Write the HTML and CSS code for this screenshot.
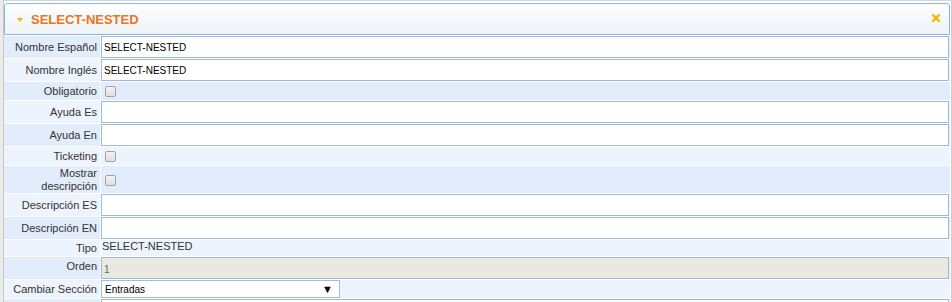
FILE: index.html
```html
<!DOCTYPE html>
<html lang="es">
<head>
    <meta charset="UTF-8" />
    <title>SELECT-NESTED</title>
    <link rel="stylesheet" href="styles.css">
</head>
<body>
    <div class="frame">
        <div class="panel-header">
            <span class="caret"></span>
            <span class="panel-title">SELECT-NESTED</span>
            <svg class="close-icon" width="8" height="8" viewBox="0 0 8 8">
                <path d="M1 1 L7 7 M7 1 L1 7" stroke="#fbb800" stroke-width="2.4" stroke-linecap="square" />
            </svg>
        </div>

        <div class="fields">
            <div class="row dark">
                <label class="field-label" for="nombreEs">Nombre Español</label>
                <div class="field-value"><input type="text" id="nombreEs" value="SELECT-NESTED"></div>
            </div>
            <div class="row light">
                <label class="field-label" for="nombreEn">Nombre Inglés</label>
                <div class="field-value"><input type="text" id="nombreEn" value="SELECT-NESTED"></div>
            </div>
            <div class="row dark check-row">
                <label class="field-label" for="obligatorio">Obligatorio</label>
                <div class="field-value"><input type="checkbox" id="obligatorio"></div>
            </div>
            <div class="row light">
                <label class="field-label" for="ayudaEs">Ayuda Es</label>
                <div class="field-value"><input type="text" id="ayudaEs"></div>
            </div>
            <div class="row dark">
                <label class="field-label" for="ayudaEn">Ayuda En</label>
                <div class="field-value"><input type="text" id="ayudaEn"></div>
            </div>
            <div class="row light check-row">
                <label class="field-label" for="ticketing">Ticketing</label>
                <div class="field-value"><input type="checkbox" id="ticketing"></div>
            </div>
            <div class="row dark tall-row">
                <label class="field-label" for="mostrarDesc">Mostrar<br>descripción</label>
                <div class="field-value"><input type="checkbox" id="mostrarDesc"></div>
            </div>
            <div class="row light">
                <label class="field-label" for="descEs">Descripción ES</label>
                <div class="field-value"><input type="text" id="descEs"></div>
            </div>
            <div class="row dark">
                <label class="field-label" for="descEn">Descripción EN</label>
                <div class="field-value"><input type="text" id="descEn"></div>
            </div>
            <div class="row light text-row">
                <span class="field-label">Tipo</span>
                <div class="field-value plain-value">SELECT-NESTED</div>
            </div>
            <div class="row dark">
                <label class="field-label label-low" for="orden">Orden</label>
                <div class="field-value"><input type="text" id="orden" value="1" disabled></div>
            </div>
            <div class="row light select-row">
                <label class="field-label" for="seccion">Cambiar Sección</label>
                <div class="field-value">
                    <div class="select-box">
                        <select id="seccion">
                            <option>Entradas</option>
                        </select>
                    </div>
                </div>
            </div>
            <!-- next row starts at the bottom edge, only its top shows -->
            <div class="row dark">
                <span class="field-label"></span>
                <div class="field-value"><input type="text" id="siguiente"></div>
            </div>
        </div>
    </div>
</body>
</html>
```

FILE: styles.css
```css
body {
    margin: 0;
    background-color: #ebebeb;
    font-family: "Liberation Sans", Arial, sans-serif;
    font-size: 11px;
    color: #333;
    height: 302px;
    overflow: hidden;
}

.frame {
    margin-left: 3px;
    padding: 2px 1px 0 0;
    background-color: #fff;
    border-left: 1px solid #c6c6c6;
    border-right: 1px solid #cfcfcf;
    border-top: 1px solid #c9d8e8;
    min-height: 320px;
}

.panel-header {
    display: flex;
    align-items: center;
    height: 30px;
    border: 1px solid #8fb6e0;
    border-radius: 3px 3px 0 0;
    background: linear-gradient(#fdfeff, #eef3f7);
    padding: 0 9px 0 12px;
}

.caret {
    width: 0;
    height: 0;
    border-left: 3px solid transparent;
    border-right: 3px solid transparent;
    border-top: 4px solid #f4b400;
    margin-right: 8px;
    margin-top: 1px;
}

.panel-title {
    flex: 1;
    color: #ee7422;
    font-weight: bold;
    font-size: 13px;
    margin-top: 1px;
}

.close-icon {
    margin-top: -2px;
}

.fields {
    padding-top: 1px;
}

.row {
    display: grid;
    grid-template-columns: 96px 1fr;
    column-gap: 1px;
    margin-bottom: 1px;
    height: 22px;
}

.row.dark > * {
    background-color: #e2ecfa;
}

.row.light > * {
    background-color: #eef4fd;
}

.check-row,
.select-row {
    height: 18px;
}

.tall-row {
    height: 27px;
}

.text-row {
    height: 16px;
}

.field-label {
    display: flex;
    align-items: center;
    justify-content: flex-end;
    text-align: right;
    padding-right: 3px;
    line-height: 13px;
}

.label-low {
    padding-bottom: 4px;
}

.field-value {
    display: flex;
    align-items: center;
    padding-right: 1px;
}

.plain-value {
    align-items: flex-start;
    padding-left: 1px;
    line-height: 13px;
}

input[type="text"] {
    box-sizing: border-box;
    width: 100%;
    height: 22px;
    margin: 0;
    padding: 0 2px;
    border: 1px solid #9dbbd9;
    background-color: #fff;
    font-family: "Liberation Sans", Arial, sans-serif;
    font-size: 10px;
    color: #000;
    outline: none;
}

input[type="text"]:disabled {
    background-color: #e9e8e1;
    color: #666;
    padding-top: 3px;
}

input[type="checkbox"] {
    appearance: none;
    box-sizing: border-box;
    width: 11px;
    height: 11px;
    margin: 0 0 0 4px;
    border: 1px solid #a3a3a3;
    border-radius: 2px;
    background: linear-gradient(#f3f3f3, #dedede);
}

.tall-row input[type="checkbox"] {
    margin-top: 1px;
}

.select-box {
    position: relative;
    width: 239px;
    height: 18px;
}

.select-box select {
    appearance: none;
    box-sizing: border-box;
    width: 100%;
    height: 18px;
    margin: 0;
    padding: 0 0 0 3px;
    border: 1px solid #a3bdd4;
    border-radius: 0;
    background-color: #fff;
    font-family: "Liberation Sans", Arial, sans-serif;
    font-size: 10px;
    color: #000;
    outline: none;
}

.select-box::after {
    content: "▼";
    position: absolute;
    right: 7px;
    top: 3px;
    font-size: 11px;
    line-height: 12px;
    color: #000;
    pointer-events: none;
}
```
